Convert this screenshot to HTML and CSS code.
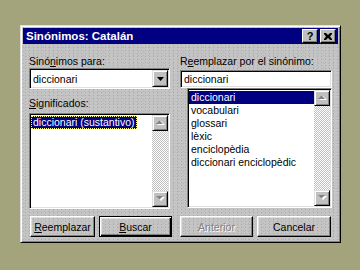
FILE: index.html
```html
<!DOCTYPE html>
<html lang="es">
<head>
    <meta charset="UTF-8">
    <title>Sinónimos: Catalán</title>
    <link rel="stylesheet" href="styles.css">
</head>
<body>
    <div class="dialog">
        <div class="titlebar">
            <span class="title">Sinónimos: Catalán</span>
            <div class="title-btns">
                <span class="tbtn help">?</span>
                <span class="tbtn close">
                    <svg width="8" height="7" viewBox="0 0 8 7"><path d="M0 0h2l2 2 2-2h2v1l-2 2.5 2 2.5v1h-2l-2-2-2 2h-2v-1l2-2.5-2-2.5z" fill="#000"/></svg>
                </span>
            </div>
        </div>

        <div class="content">
            <div class="col">
                <label class="lbl">Sinó<u>n</u>imos para:</label>
                <div class="combo">
                    <span class="field-text">diccionari</span>
                    <span class="drop">
                        <svg width="7" height="4" viewBox="0 0 7 4"><path d="M0 0h7l-3.5 4z" fill="#000"/></svg>
                    </span>
                </div>
                <label class="lbl lbl-gap"><u>S</u>ignificados:</label>
                <div class="list meanings">
                    <ul class="items">
                        <li><span class="sel focus">diccionari (sustantivo)</span></li>
                    </ul>
                    <div class="scrollbar">
                        <span class="sbtn"><svg width="9" height="6" viewBox="0 0 9 6"><path d="M1 5h8l-4-4z" fill="#fff"/><path d="M0 4h7l-3.5-3.5z" fill="#808080"/></svg></span>
                        <span class="track"></span>
                        <span class="sbtn"><svg width="9" height="6" viewBox="0 0 9 6"><path d="M1 1h8l-4 4z" fill="#fff"/><path d="M0 0h7l-3.5 3.5z" fill="#808080"/></svg></span>
                    </div>
                </div>
            </div>

            <div class="col">
                <label class="lbl">R<u>e</u>emplazar por el sinónimo:</label>
                <div class="textbox">diccionari</div>
                <div class="list synonyms">
                    <ul class="items">
                        <li class="sel">diccionari</li>
                        <li>vocabulari</li>
                        <li>glossari</li>
                        <li>lèxic</li>
                        <li>enciclopèdia</li>
                        <li>diccionari enciclopèdic</li>
                    </ul>
                    <div class="scrollbar">
                        <span class="sbtn"><svg width="9" height="6" viewBox="0 0 9 6"><path d="M1 5h8l-4-4z" fill="#fff"/><path d="M0 4h7l-3.5-3.5z" fill="#808080"/></svg></span>
                        <span class="track"></span>
                        <span class="sbtn"><svg width="9" height="6" viewBox="0 0 9 6"><path d="M1 1h8l-4 4z" fill="#fff"/><path d="M0 0h7l-3.5 3.5z" fill="#808080"/></svg></span>
                    </div>
                </div>
            </div>
        </div>

        <div class="buttons">
            <button class="btn btn-replace"><u>R</u>eemplazar</button>
            <button class="btn btn-default btn-search"><u>B</u>uscar</button>
            <button class="btn btn-prev" disabled>Anterior</button>
            <button class="btn btn-cancel">Cancelar</button>
        </div>
    </div>
</body>
</html>
```

FILE: styles.css
```css
* {
    margin: 0;
    padding: 0;
    box-sizing: border-box;
}

body {
    background: #a3a37c;
    padding: 25px 0 0 20px;
    font-family: 'Liberation Sans', Arial, sans-serif;
    font-size: 10.5px;
    color: #000;
}

u {
    text-decoration: underline;
    text-underline-offset: 1px;
}

.dialog {
    width: 321px;
    height: 218px;
    padding: 2px;
    background-color: #c4c4c4;
    background-image:
        conic-gradient(from 270deg at 1px 1px, #a9a9a9 25%, transparent 0),
        conic-gradient(from 270deg at 1px 1px, #b2b2b2 25%, transparent 0);
    background-size: 4px 3px, 5px 4px;
    background-position: 0 0, 2px 1px;
    border: 1px solid;
    border-color: #dfdfdf #000 #000 #dfdfdf;
    box-shadow: inset 1px 1px #fff, inset -1px -1px #808080;
    display: flex;
    flex-direction: column;
}

/* title bar */
.titlebar {
    height: 16px;
    background: #000080;
    display: flex;
    align-items: center;
    padding: 0 2px 0 3px;
}

.title {
    color: #fff;
    font-weight: bold;
    font-size: 11.5px;
}

.title-btns {
    margin-left: auto;
    display: flex;
    gap: 2px;
}

.tbtn {
    width: 16px;
    height: 14px;
    background: #c0c0c0;
    border: 1px solid;
    border-color: #fff #000 #000 #fff;
    box-shadow: inset -1px -1px #808080;
    display: flex;
    align-items: center;
    justify-content: center;
    font-weight: bold;
    font-size: 11px;
    line-height: 1;
}

/* two columns */
.content {
    display: grid;
    grid-template-columns: 141px 152px;
    column-gap: 10px;
    padding: 0 5px 0 6px;
    margin-top: 11px;
}

.col {
    display: flex;
    flex-direction: column;
}

.lbl {
    height: 13px;
    line-height: 13px;
}

.lbl-gap {
    margin-top: 8px;
}

.combo,
.textbox,
.list {
    background: #fff;
    border: 1px solid;
    border-color: #808080 #fff #fff #808080;
    box-shadow: inset 1px 1px #000, inset -1px -1px #dfdfdf;
    padding: 1px;
}

.combo {
    height: 21px;
    display: flex;
    align-items: center;
}

.field-text {
    flex: 1;
    padding-left: 2px;
}

.drop {
    width: 16px;
    height: 17px;
    background: #c0c0c0;
    border: 1px solid;
    border-color: #dfdfdf #000 #000 #dfdfdf;
    box-shadow: inset 1px 1px #fff, inset -1px -1px #808080;
    display: flex;
    align-items: center;
    justify-content: center;
}

.textbox {
    height: 18px;
    margin-top: 2px;
    line-height: 14px;
    padding-left: 3px;
}

.list {
    display: flex;
}

.meanings {
    height: 96px;
    margin-top: 3px;
}

.synonyms {
    height: 120px;
    margin-left: 7px;
}

.items {
    list-style: none;
    flex: 1;
    padding-top: 1px;
}

.items li {
    height: 13px;
    line-height: 13px;
    padding-left: 2px;
    white-space: nowrap;
}

.items .sel {
    background: #000080;
    color: #fff;
}

.items .focus {
    display: inline-block;
    height: 13px;
    margin-left: -2px;
    padding: 0 2px;
    outline: 1px dotted #ffff80;
    outline-offset: -1px;
}

.scrollbar {
    width: 16px;
    display: flex;
    flex-direction: column;
}

.sbtn {
    height: 16px;
    background: #c0c0c0;
    border: 1px solid;
    border-color: #dfdfdf #000 #000 #dfdfdf;
    box-shadow: inset 1px 1px #fff, inset -1px -1px #808080;
    display: flex;
    align-items: center;
    justify-content: center;
}

.track {
    flex: 1;
    background: repeating-conic-gradient(#c0c0c0 0 25%, #fff 0 50%) 0 0 / 2px 2px;
}

/* bottom buttons */
.buttons {
    display: flex;
    margin-top: 7px;
    padding-left: 7px;
}

.btn {
    height: 21px;
    background: transparent;
    border: 1px solid;
    border-color: #fff #000 #000 #fff;
    box-shadow: inset -1px -1px #808080, inset 1px 1px #dfdfdf;
    font-family: inherit;
    font-size: 10.5px;
    color: #000;
}

.btn-default {
    border-color: #000;
    box-shadow: inset 1px 1px #fff, inset -1px -1px #000, inset -2px -2px #808080, inset 2px 2px #dfdfdf;
}

.btn-replace { width: 65px; }
.btn-search { width: 73px; margin-left: 4px; }
.btn-prev { width: 73px; margin-left: 8px; }
.btn-cancel { width: 74px; margin-left: 4px; }

.btn:disabled {
    color: #808080;
    text-shadow: 1px 1px #fff;
}
```
